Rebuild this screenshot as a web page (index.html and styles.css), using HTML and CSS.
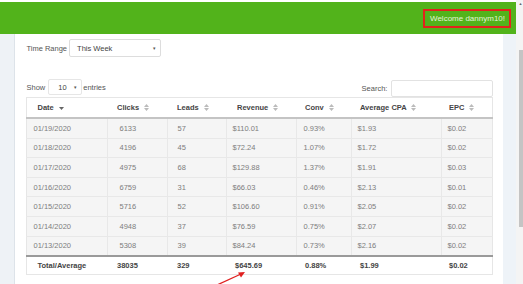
FILE: index.html
```html
<!DOCTYPE html>
<html>
<head>
<meta charset="utf-8">
<link rel="stylesheet" href="styles.css">
</head>
<body>
<div class="app">
  <div class="main">
    <header class="topbar">
      <div class="welcome">Welcome dannym10!</div>
    </header>
    <div class="content">
      <div class="strip-left"></div>
      <div class="panel">
        <div class="range-row">
          <span class="label">Time Range</span>
          <div class="select select-range"><span>This Week</span><span class="caret">&#9662;</span></div>
        </div>
        <div class="controls">
          <div class="length">
            <span>Show</span>
            <div class="select select-len"><span>10</span><span class="caret">&#9662;</span></div>
            <span>entries</span>
          </div>
          <div class="search">
            <span>Search:</span>
            <div class="input"></div>
          </div>
        </div>
        <table class="grid">
          <colgroup>
            <col style="width:81px"><col style="width:60px"><col style="width:59px"><col style="width:70px"><col style="width:55px"><col style="width:90px"><col style="width:51px">
          </colgroup>
          <thead>
            <tr>
              <th>Date <svg class="sort" width="5" height="7" viewBox="0 0 5 7"><path d="M0 3 L5 3 L2.5 6 Z" fill="#666"/></svg></th>
              <th>Clicks <svg class="sort" width="5" height="7" viewBox="0 0 5 7"><path d="M0 3 L5 3 L2.5 0 Z M0 4 L5 4 L2.5 7 Z" fill="#bbb"/></svg></th>
              <th>Leads <svg class="sort" width="5" height="7" viewBox="0 0 5 7"><path d="M0 3 L5 3 L2.5 0 Z M0 4 L5 4 L2.5 7 Z" fill="#bbb"/></svg></th>
              <th>Revenue <svg class="sort" width="5" height="7" viewBox="0 0 5 7"><path d="M0 3 L5 3 L2.5 0 Z M0 4 L5 4 L2.5 7 Z" fill="#bbb"/></svg></th>
              <th>Conv <svg class="sort" width="5" height="7" viewBox="0 0 5 7"><path d="M0 3 L5 3 L2.5 0 Z M0 4 L5 4 L2.5 7 Z" fill="#bbb"/></svg></th>
              <th>Average CPA <svg class="sort" width="5" height="7" viewBox="0 0 5 7"><path d="M0 3 L5 3 L2.5 0 Z M0 4 L5 4 L2.5 7 Z" fill="#bbb"/></svg></th>
              <th>EPC <svg class="sort" width="5" height="7" viewBox="0 0 5 7"><path d="M0 3 L5 3 L2.5 0 Z M0 4 L5 4 L2.5 7 Z" fill="#bbb"/></svg></th>
            </tr>
          </thead>
          <tbody>
            <tr><td>01/19/2020</td><td>6133</td><td>57</td><td>$110.01</td><td>0.93%</td><td>$1.93</td><td>$0.02</td></tr>
            <tr><td>01/18/2020</td><td>4196</td><td>45</td><td>$72.24</td><td>1.07%</td><td>$1.72</td><td>$0.02</td></tr>
            <tr><td>01/17/2020</td><td>4975</td><td>68</td><td>$129.88</td><td>1.37%</td><td>$1.91</td><td>$0.03</td></tr>
            <tr><td>01/16/2020</td><td>6759</td><td>31</td><td>$66.03</td><td>0.46%</td><td>$2.13</td><td>$0.01</td></tr>
            <tr><td>01/15/2020</td><td>5716</td><td>52</td><td>$106.60</td><td>0.91%</td><td>$2.05</td><td>$0.02</td></tr>
            <tr><td>01/14/2020</td><td>4948</td><td>37</td><td>$76.59</td><td>0.75%</td><td>$2.07</td><td>$0.02</td></tr>
            <tr><td>01/13/2020</td><td>5308</td><td>39</td><td>$84.24</td><td>0.73%</td><td>$2.16</td><td>$0.02</td></tr>
          </tbody>
          <tfoot>
            <tr><td>Total/Average</td><td>38035</td><td>329</td><td>$645.69</td><td>0.88%</td><td>$1.99</td><td>$0.02</td></tr>
          </tfoot>
        </table>
        <svg class="arrow" width="34" height="18" viewBox="0 0 34 18">
          <line x1="2" y1="16" x2="26" y2="5" stroke="#e02020" stroke-width="1.3"/>
          <path d="M30 3 L23 3.5 L26 8.5 Z" fill="#e02020"/>
        </svg>
      </div>
      <div class="strip-right"></div>
    </div>
  </div>
  <div class="scrollbar">
    <div class="sb-arrow">&#9650;</div>
    <div class="thumb"></div>
  </div>
</div>
</body>
</html>
```

FILE: styles.css
```css
html, body {
  margin: 0;
  padding: 0;
  background: #fff;
}
body {
  width: 523px;
  height: 284px;
  overflow: hidden;
  font-family: "Liberation Sans", Arial, sans-serif;
  font-size: 7.5px;
  color: #666;
}
.app {
  display: flex;
  height: 284px;
}
.main {
  width: 516px;
  display: flex;
  flex-direction: column;
  padding-top: 2px;
  box-sizing: border-box;
}
.topbar {
  height: 32px;
  background: #52b31b;
  display: flex;
  justify-content: flex-end;
  align-items: flex-start;
  padding: 7px 5px 0 0;
  box-sizing: border-box;
}
.welcome {
  border: 2px solid #e3231c;
  height: 19px;
  box-sizing: border-box;
  padding: 0 4px 0 5px;
  line-height: 15px;
  font-size: 8px;
  color: #e4f2d8;
}
.content {
  flex: 1;
  display: flex;
}
.strip-left {
  width: 15px;
  background: #eef2f6;
  border-right: 1px solid #dde3e9;
}
.strip-right {
  width: 13px;
  background: #eef3f8;
}
.panel {
  position: relative;
  flex: 1;
  background: #fff;
  padding: 5px 10px 0 11px;
}
.range-row {
  display: flex;
  align-items: center;
  height: 18px;
}
.label {
  color: #555;
  margin-right: 2px;
}
.select {
  display: flex;
  align-items: center;
  justify-content: space-between;
  border: 1px solid #ddd;
  border-radius: 2px;
  background: #fff;
  box-sizing: border-box;
  color: #444;
}
.select-range {
  width: 92px;
  height: 18px;
  padding: 0 4px 0 7px;
}
.caret {
  font-size: 5px;
  color: #555;
}
.controls {
  margin-top: 22px;
  height: 18px;
  display: flex;
  justify-content: space-between;
  align-items: flex-start;
  color: #555;
}
.length {
  display: flex;
  align-items: center;
  height: 16px;
}
.select-len {
  width: 34px;
  height: 16px;
  margin: 0 1px 0 3px;
  padding: 0 4px 0 9px;
  border-color: #e6e6e6;
}
.search {
  display: flex;
  align-items: center;
  height: 18px;
}
.input {
  width: 102px;
  height: 17px;
  border: 1px solid #e2e2e2;
  border-radius: 2px;
  box-sizing: border-box;
  margin-left: 4px;
}
.grid {
  border-collapse: collapse;
  table-layout: fixed;
  width: 466px;
  border: 1px solid #e6e6e6;
}
.grid th {
  height: 19px;
  padding: 0 0 0 9px;
  text-align: left;
  font-weight: bold;
  color: #444;
  border-bottom: 2px solid #c4c4c4;
  white-space: nowrap;
}
.grid th:first-child { padding-left: 10px; }
.grid th:nth-child(4) { padding-left: 10px; }
.grid th:nth-child(5),
.grid th:nth-child(6) { padding-left: 8px; }
.grid th:nth-child(7) { padding-left: 7px; }
.sort {
  vertical-align: -1px;
  margin-left: 3px;
}
.grid tbody td {
  height: 18.6px;
  padding: 0 0 0 5px;
  background: #f5f5f5;
  border-top: 1px solid #e8e8e8;
  border-left: 1px solid #e8e8e8;
  color: #7d7d7d;
}
.grid tbody td:first-child { padding-left: 6px; border-left: none; }
.grid tbody td:nth-child(2) { padding-left: 11px; }
.grid tbody td:nth-child(3) { padding-left: 9px; }
.grid tbody td:nth-child(5) { padding-left: 6px; }
.grid tbody tr:first-child td { border-top: none; }
.grid tfoot td {
  height: 17px;
  padding: 0 0 0 9px;
  border-top: 2px solid #9a9a9a;
  font-weight: bold;
  color: #444;
}
.grid tfoot td:first-child { padding-left: 10px; }
.grid tfoot td:nth-child(4) { padding-left: 8px; }
.grid tfoot td:nth-child(5),
.grid tfoot td:nth-child(6) { padding-left: 8px; }
.grid tfoot td:nth-child(7) { padding-left: 7px; }
.arrow {
  position: absolute;
  left: 200px;
  top: 235px;
}
.scrollbar {
  width: 7px;
  background: #f4f4f4;
  display: flex;
  flex-direction: column;
  align-items: flex-end;
}
.sb-arrow {
  font-size: 4px;
  color: #666;
  height: 8px;
  width: 5px;
  text-align: center;
  line-height: 8px;
}
.thumb {
  margin-top: 42px;
  width: 4px;
  height: 177px;
  background: #c4c4c4;
}
```
